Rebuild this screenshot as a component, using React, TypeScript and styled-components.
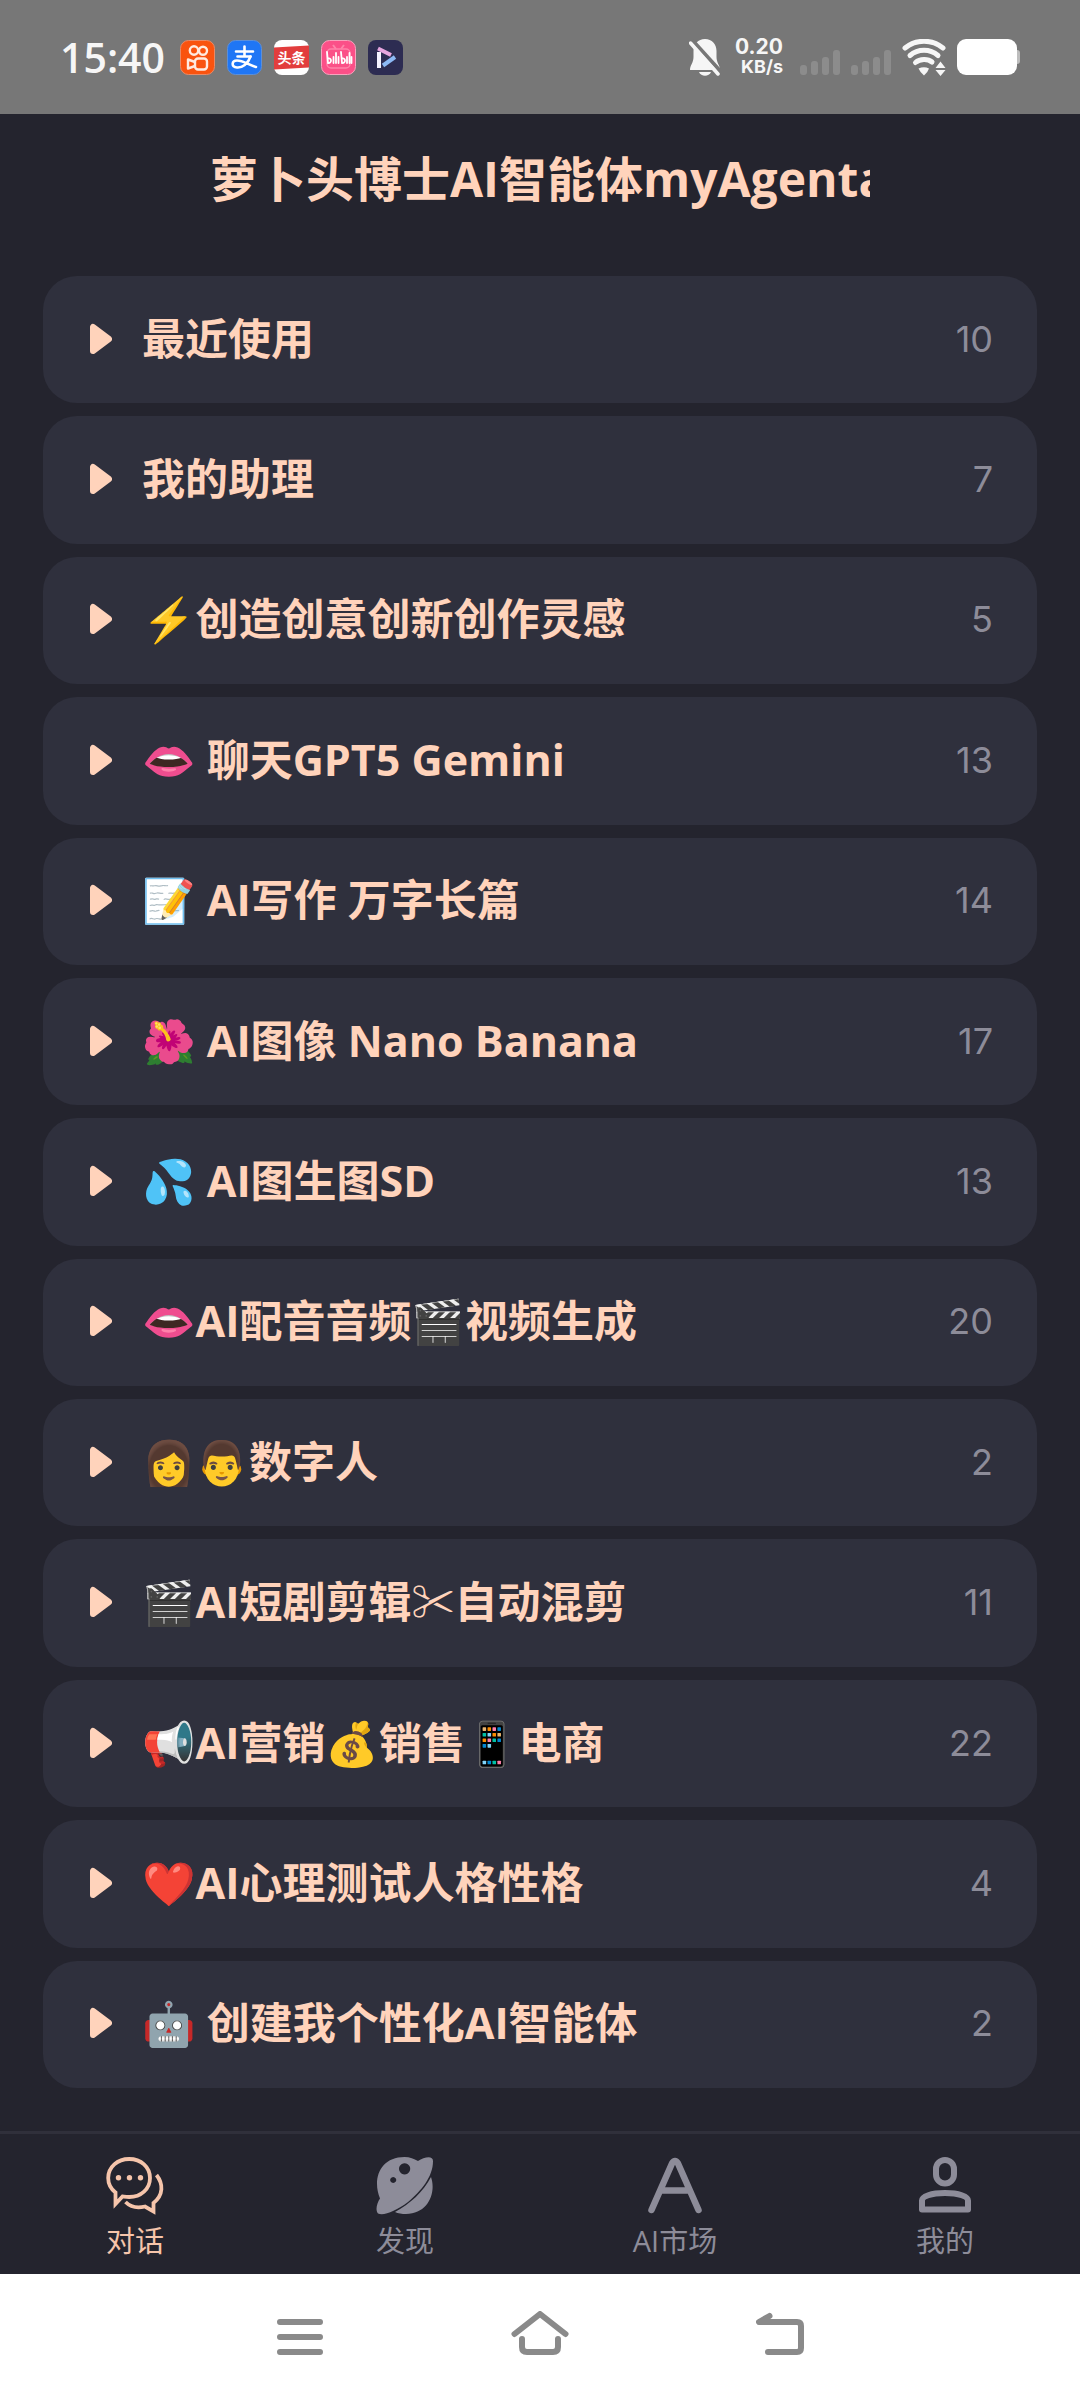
import React, { useState } from "react";
import styled, { createGlobalStyle } from "styled-components";

const colors = {
  page: "#24242e",
  card: "#2f303d",
  line: "#30303b",
  accent: "#ffd3bb",
  tabActive: "#f6c5ab",
  muted: "#8d8c99",
  status: "#777777",
  system: "#8a8a8a",
};

const numeric = `Inter, "Noto Sans", sans-serif`;

const GlobalStyle = createGlobalStyle`
  *, *::before, *::after { box-sizing: border-box; }
  body {
    margin: 0;
    background: ${colors.page};
    font-family: "Open Sans", "Noto Sans CJK SC", "Noto Color Emoji", sans-serif;
  }
  button { font: inherit; border: 0; background: none; padding: 0; cursor: pointer; }
  svg { display: block; flex: none; }
`;

const Screen = styled.div`
  min-height: 100vh;
  display: flex;
  flex-direction: column;
  background: ${colors.page};
`;

const StatusBar = styled.div`
  height: 114px;
  flex: none;
  display: flex;
  align-items: center;
  justify-content: space-between;
  padding: 0 60px;
  background: ${colors.status};
  color: #f6f6f6;
`;

const StatusGroup = styled.div<{ $gap: number }>`
  display: flex;
  align-items: center;
  gap: ${(p) => p.$gap}px;
`;

const Clock = styled.time`
  font-size: 41px;
  line-height: 48px;
  font-weight: 600;
  margin-right: 3px;
`;

const NetSpeed = styled.div`
  display: flex;
  flex-direction: column;
  align-items: flex-end;
  font-family: ${numeric};
  line-height: 20px;
  font-weight: 700;
  margin: 0 6px 0 3px;
`;

const SpeedValue = styled.span`
  font-size: 21px;
`;

const SpeedUnit = styled.span`
  font-size: 18px;
`;

const Header = styled.header`
  flex: none;
  height: 130px;
  display: flex;
  align-items: center;
  justify-content: center;
`;

const Title = styled.h1`
  width: calc(100% - 420px);
  margin: 0;
  overflow: hidden;
  white-space: nowrap;
  font-size: 48px;
  line-height: 72px;
  font-weight: 700;
  color: ${colors.accent};
`;

const GroupList = styled.ul`
  flex: 1;
  display: grid;
  grid-auto-rows: 1fr;
  gap: 13px;
  margin: 0;
  padding: 32px 43px 43px;
  list-style: none;
`;

const GroupItem = styled.li`
  display: flex;
`;

const GroupButton = styled.button`
  flex: 1;
  min-height: 120px;
  display: flex;
  align-items: center;
  padding: 0 44px 2px 47px;
  border-radius: 34px;
  background: ${colors.card};
  color: ${colors.accent};
  text-align: left;
`;

const GroupName = styled.span`
  flex: 1;
  margin-left: 30px;
  font-size: 43px;
  line-height: 60px;
  font-weight: 700;
  white-space: nowrap;
`;

const GroupCount = styled.span`
  font-family: ${numeric};
  font-size: 36px;
  line-height: 60px;
  color: ${colors.muted};
`;

const TabBar = styled.nav`
  flex: none;
  display: grid;
  grid-template-columns: repeat(4, 1fr);
  height: 143px;
  border-top: 3px solid ${colors.line};
`;

const Tab = styled.button<{ $active: boolean }>`
  display: flex;
  flex-direction: column;
  align-items: center;
  padding-top: 23px;
  gap: 6px;
  color: ${(p) => (p.$active ? colors.tabActive : colors.muted)};
`;

const TabLabel = styled.span`
  font-size: 29px;
  line-height: 40px;
`;

const SystemBar = styled.div`
  flex: none;
  height: 126px;
  display: flex;
  justify-content: center;
  padding-bottom: 8px;
  background: #ffffff;
`;

const SystemButton = styled.button`
  width: 240px;
  display: flex;
  align-items: center;
  justify-content: center;
  color: ${colors.system};
`;

const groups = [
  { name: "最近使用", count: 10 },
  { name: "我的助理", count: 7 },
  { name: "⚡创造创意创新创作灵感", count: 5 },
  { name: "👄 聊天GPT5 Gemini", count: 13 },
  { name: "📝 AI写作 万字长篇", count: 14 },
  { name: "🌺 AI图像 Nano Banana", count: 17 },
  { name: "💦 AI图生图SD", count: 13 },
  { name: "👄AI配音音频🎬视频生成", count: 20 },
  { name: "👩👨数字人", count: 2 },
  { name: "🎬AI短剧剪辑✂自动混剪", count: 11 },
  { name: "📢AI营销💰销售📱电商", count: 22 },
  { name: "❤️AI心理测试人格性格", count: 4 },
  { name: "🤖 创建我个性化AI智能体", count: 2 },
];

const Caret = () => (
  <svg width="22" height="32" viewBox="0 0 22 32" aria-hidden="true">
    <path d="M3 4 V28 L19 16 Z" fill="currentColor" stroke="currentColor" strokeWidth="6" strokeLinejoin="round" />
  </svg>
);

const KuaishouIcon = () => (
  <svg width="35" height="35" viewBox="0 0 35 35" role="img" aria-label="快手">
    <rect x=".5" y=".5" width="34" height="34" rx="8" fill="#f9530f" stroke="#e98a66" />
    <g fill="none" stroke="#ffeadf" strokeWidth="2.4" strokeLinejoin="round">
      <circle cx="14" cy="10.5" r="4.2" />
      <circle cx="23" cy="10.8" r="4" />
      <rect x="15" y="18.5" width="12" height="11" rx="3" />
      <path d="M15 22 L8 19.5 V28.5 L15 26" />
    </g>
  </svg>
);

const AlipayIcon = () => (
  <svg width="35" height="35" viewBox="0 0 35 35" role="img" aria-label="支付宝">
    <rect x=".5" y=".5" width="34" height="34" rx="8" fill="#1f76f5" stroke="#5c8fd8" />
    <g fill="none" stroke="#ffffff" strokeWidth="2.6" strokeLinecap="round">
      <path d="M9 11.5 H26 M17.5 6.5 V16 M10.5 16.5 H23.5" />
      <path d="M23.5 16.5 C21 24 15 28 10 27.5 C4 27 4.5 20.5 10 20.5 C16 20.5 22 25 29 27" />
    </g>
  </svg>
);

const ToutiaoIcon = () => (
  <svg width="35" height="35" viewBox="0 0 35 35" role="img" aria-label="头条">
    <rect width="35" height="35" rx="8" fill="#ffffff" />
    <path d="M0 7.5 L35 5.5 V27.5 L0 29.5 Z" fill="#e23d3d" />
    <text x="17.5" y="23" fontSize="14" fontWeight="700" textAnchor="middle" fill="#fff">头条</text>
  </svg>
);

const BilibiliIcon = () => (
  <svg width="35" height="35" viewBox="0 0 35 35" role="img" aria-label="哔哩哔哩">
    <rect x=".5" y=".5" width="34" height="34" rx="8" fill="#fb5088" stroke="#f7a3bd" />
    <rect x="6" y="9" width="23" height="19" rx="4" fill="none" stroke="#ff83a9" strokeWidth="1.5" />
    <path d="M12 5 L15 9 M23 5 L20 9" stroke="#ff83a9" strokeWidth="2" />
    <g fill="none" stroke="#fff" strokeWidth="1.8" strokeLinecap="round">
      <path d="M6 12 L7 23 C11 23.5 11 17.5 7 18.5 M12.5 17 V23 M15 13 V23 M17.5 17 V23" />
      <path d="M20 12 L21 23 C25 23.5 25 17.5 21 18.5 M26 17 V23 M28.5 13 V23 M30.5 17 V23" />
    </g>
  </svg>
);

const PlayerIcon = () => (
  <svg width="35" height="35" viewBox="0 0 35 35" role="img" aria-label="视频">
    <rect width="35" height="35" rx="8" fill="#2d2c52" />
    <g fill="none" strokeWidth="4">
      <path d="M11 12 V28" stroke="#f5f3ff" />
      <path d="M10 8.5 L23 15" stroke="#e7a6df" />
      <path d="M15 25.5 L27 17" stroke="#8cb9f5" />
    </g>
  </svg>
);

const MutedBell = () => (
  <svg width="32" height="37" viewBox="0 0 32 37" role="img" aria-label="静音">
    <path
      d="M16 0 C23 0 27.5 5 27.5 12 V18 C27.5 24 31 26 31 31 H1 C1 26 4.5 24 4.5 18 V12 C4.5 5 9 0 16 0 Z"
      fill="#f6f6f6"
    />
    <path d="M10 33 H22 C20 38 12 38 10 33 Z" fill="#f6f6f6" />
    <path d="M3 1 L33 34" stroke={colors.status} strokeWidth="4" />
    <path d="M1.5 4 L29 35" stroke="#f6f6f6" strokeWidth="3.5" strokeLinecap="round" />
  </svg>
);

const Signal = () => (
  <svg width="40" height="36" viewBox="0 0 40 36" role="img" aria-label="无信号">
    <g fill="#8c8c8c">
      <rect x="0" y="26" width="7" height="10" rx="3" />
      <rect x="11" y="22" width="7" height="14" rx="3" />
      <rect x="22" y="18" width="7" height="18" rx="3" />
      <rect x="33" y="11" width="7" height="25" rx="3" />
    </g>
  </svg>
);

const Wifi = () => (
  <svg width="44" height="37" viewBox="0 0 44 37" role="img" aria-label="无线网络">
    <g fill="none" stroke="#f6f6f6" strokeWidth="5" strokeLinecap="round">
      <path d="M3 9 C14 0 30 0 41 9" />
      <path d="M8 16.5 C16 9.5 28 9.5 36 16.5" />
      <path d="M13.5 23.5 C18 19.5 26 19.5 30 23" />
    </g>
    <path d="M16.5 29.5 Q22 27 27 29.5 Q26 33 22 36.5 Q18 33 16.5 29.5 Z" fill="#f6f6f6" />
    <path d="M33.5 29 L38.5 22.5 L43.5 29 Z M33.5 31 L38.5 37 L43.5 31 Z" fill="#f6f6f6" />
  </svg>
);

const Battery = () => (
  <svg width="63" height="36" viewBox="0 0 63 36" role="img" aria-label="电量">
    <rect x="56" y="11" width="7" height="14" rx="3" fill="#bdbdbd" />
    <rect width="60" height="36" rx="9" fill="#ffffff" />
  </svg>
);

const ChatIcon = () => (
  <svg width="58" height="58" viewBox="0 0 58 58" fill="none" stroke="currentColor" strokeWidth="3.8" aria-hidden="true">
    <path d="M9.5 47 V35.5 C5 32 2.2 27 2.2 21 C2.2 10 11.5 2 23.2 2 C35 2 44 10 44 21 C44 32 35 40 23.2 40 C20.5 40 18.5 39.7 16.5 39.5 Z" />
    <path d="M50.5 18 C57.5 27 57.5 38 47.5 46 V54.5 L39 49.5 C31 51.5 24 49.5 19.5 45" />
    <g fill="currentColor" stroke="none">
      <circle cx="12.5" cy="20.8" r="2.7" />
      <circle cx="23.5" cy="20.8" r="2.7" />
      <circle cx="34.5" cy="20.8" r="2.7" />
    </g>
  </svg>
);

const PlanetIcon = () => (
  <svg width="58" height="58" viewBox="0 0 58 58" fill="currentColor" aria-hidden="true">
    <path
      fillRule="evenodd"
      d="M42 4 C48 0 57 -2 57 4 C57 20 45 34 32 45 C20 54 8 59 2 56.5 C-1 53 1 46 4 41.5 C-4 22 4 0 28.5 0 C34 0 38 2 42 4 Z
         M28.6 6.2 a5.6 5.6 0 1 0 0.01 0 Z M17.2 20 a3 3 0 1 0 0.01 0 Z"
    />
    <path d="M55 20 C60.5 36 52 57 30 57 C26 57 22 56.5 19 55 C34 47 47 35 55 20 Z" />
  </svg>
);

const MarketIcon = () => (
  <svg width="58" height="58" viewBox="0 0 58 58" fill="none" stroke="currentColor" strokeWidth="6.5" strokeLinecap="round" aria-hidden="true">
    <path d="M5.5 53 L26 6.5 Q29 1.5 32 6.5 L52.5 53 M16 33.5 H42" />
  </svg>
);

const PersonIcon = () => (
  <svg width="58" height="58" viewBox="0 0 58 58" fill="none" stroke="currentColor" strokeWidth="6" strokeLinejoin="round" aria-hidden="true">
    <rect x="20" y="3" width="18" height="23.5" rx="9" />
    <path d="M6 52.5 V43.5 C6 39.5 15 36 29 36 C43 36 52 39.5 52 43.5 V52.5 Z" />
  </svg>
);

const tabs = [
  { label: "对话", Icon: ChatIcon },
  { label: "发现", Icon: PlanetIcon },
  { label: "AI市场", Icon: MarketIcon },
  { label: "我的", Icon: PersonIcon },
];

const MenuLines = () => (
  <svg width="48" height="44" viewBox="0 0 48 44" aria-hidden="true">
    <path d="M4 11 H44 M4 26 H44 M4 41 H44" stroke="currentColor" strokeWidth="6" strokeLinecap="round" />
  </svg>
);

const HomeOutline = () => (
  <svg width="58" height="44" viewBox="0 0 58 44" fill="none" stroke="currentColor" strokeWidth="6" strokeLinecap="round" strokeLinejoin="round" aria-hidden="true">
    <path d="M3.5 23 L29 3 L54.5 23" />
    <path d="M11 28 V36 Q11 41 16 41 H42 Q47 41 47 36 V28" />
  </svg>
);

const BackArrow = () => (
  <svg width="48" height="44" viewBox="0 0 48 44" fill="none" stroke="currentColor" strokeWidth="6" strokeLinecap="round" strokeLinejoin="round" aria-hidden="true">
    <path d="M13.5 5 L3 11 H41 Q45 11 45 15 V37 Q45 41 41 41 H12" />
  </svg>
);

export default function App() {
  const [activeTab, setActiveTab] = useState("对话");

  return (
    <>
      <GlobalStyle />
      <Screen>
        <StatusBar>
          <StatusGroup $gap={12}>
            <Clock>15:40</Clock>
            <KuaishouIcon />
            <AlipayIcon />
            <ToutiaoIcon />
            <BilibiliIcon />
            <PlayerIcon />
          </StatusGroup>
          <StatusGroup $gap={11}>
            <MutedBell />
            <NetSpeed>
              <SpeedValue>0.20</SpeedValue>
              <SpeedUnit>KB/s</SpeedUnit>
            </NetSpeed>
            <Signal />
            <Signal />
            <Wifi />
            <Battery />
          </StatusGroup>
        </StatusBar>

        <Header>
          <Title>萝卜头博士AI智能体myAgenta</Title>
        </Header>

        <GroupList>
          {groups.map((group) => (
            <GroupItem key={group.name}>
              <GroupButton type="button" aria-expanded={false}>
                <Caret />
                <GroupName>{group.name}</GroupName>
                <GroupCount>{group.count}</GroupCount>
              </GroupButton>
            </GroupItem>
          ))}
        </GroupList>

        <TabBar>
          {tabs.map(({ label, Icon }) => (
            <Tab key={label} type="button" $active={label === activeTab} onClick={() => setActiveTab(label)}>
              <Icon />
              <TabLabel>{label}</TabLabel>
            </Tab>
          ))}
        </TabBar>

        <SystemBar>
          <SystemButton type="button" aria-label="最近任务">
            <MenuLines />
          </SystemButton>
          <SystemButton type="button" aria-label="主屏幕">
            <HomeOutline />
          </SystemButton>
          <SystemButton type="button" aria-label="返回">
            <BackArrow />
          </SystemButton>
        </SystemBar>
      </Screen>
    </>
  );
}
